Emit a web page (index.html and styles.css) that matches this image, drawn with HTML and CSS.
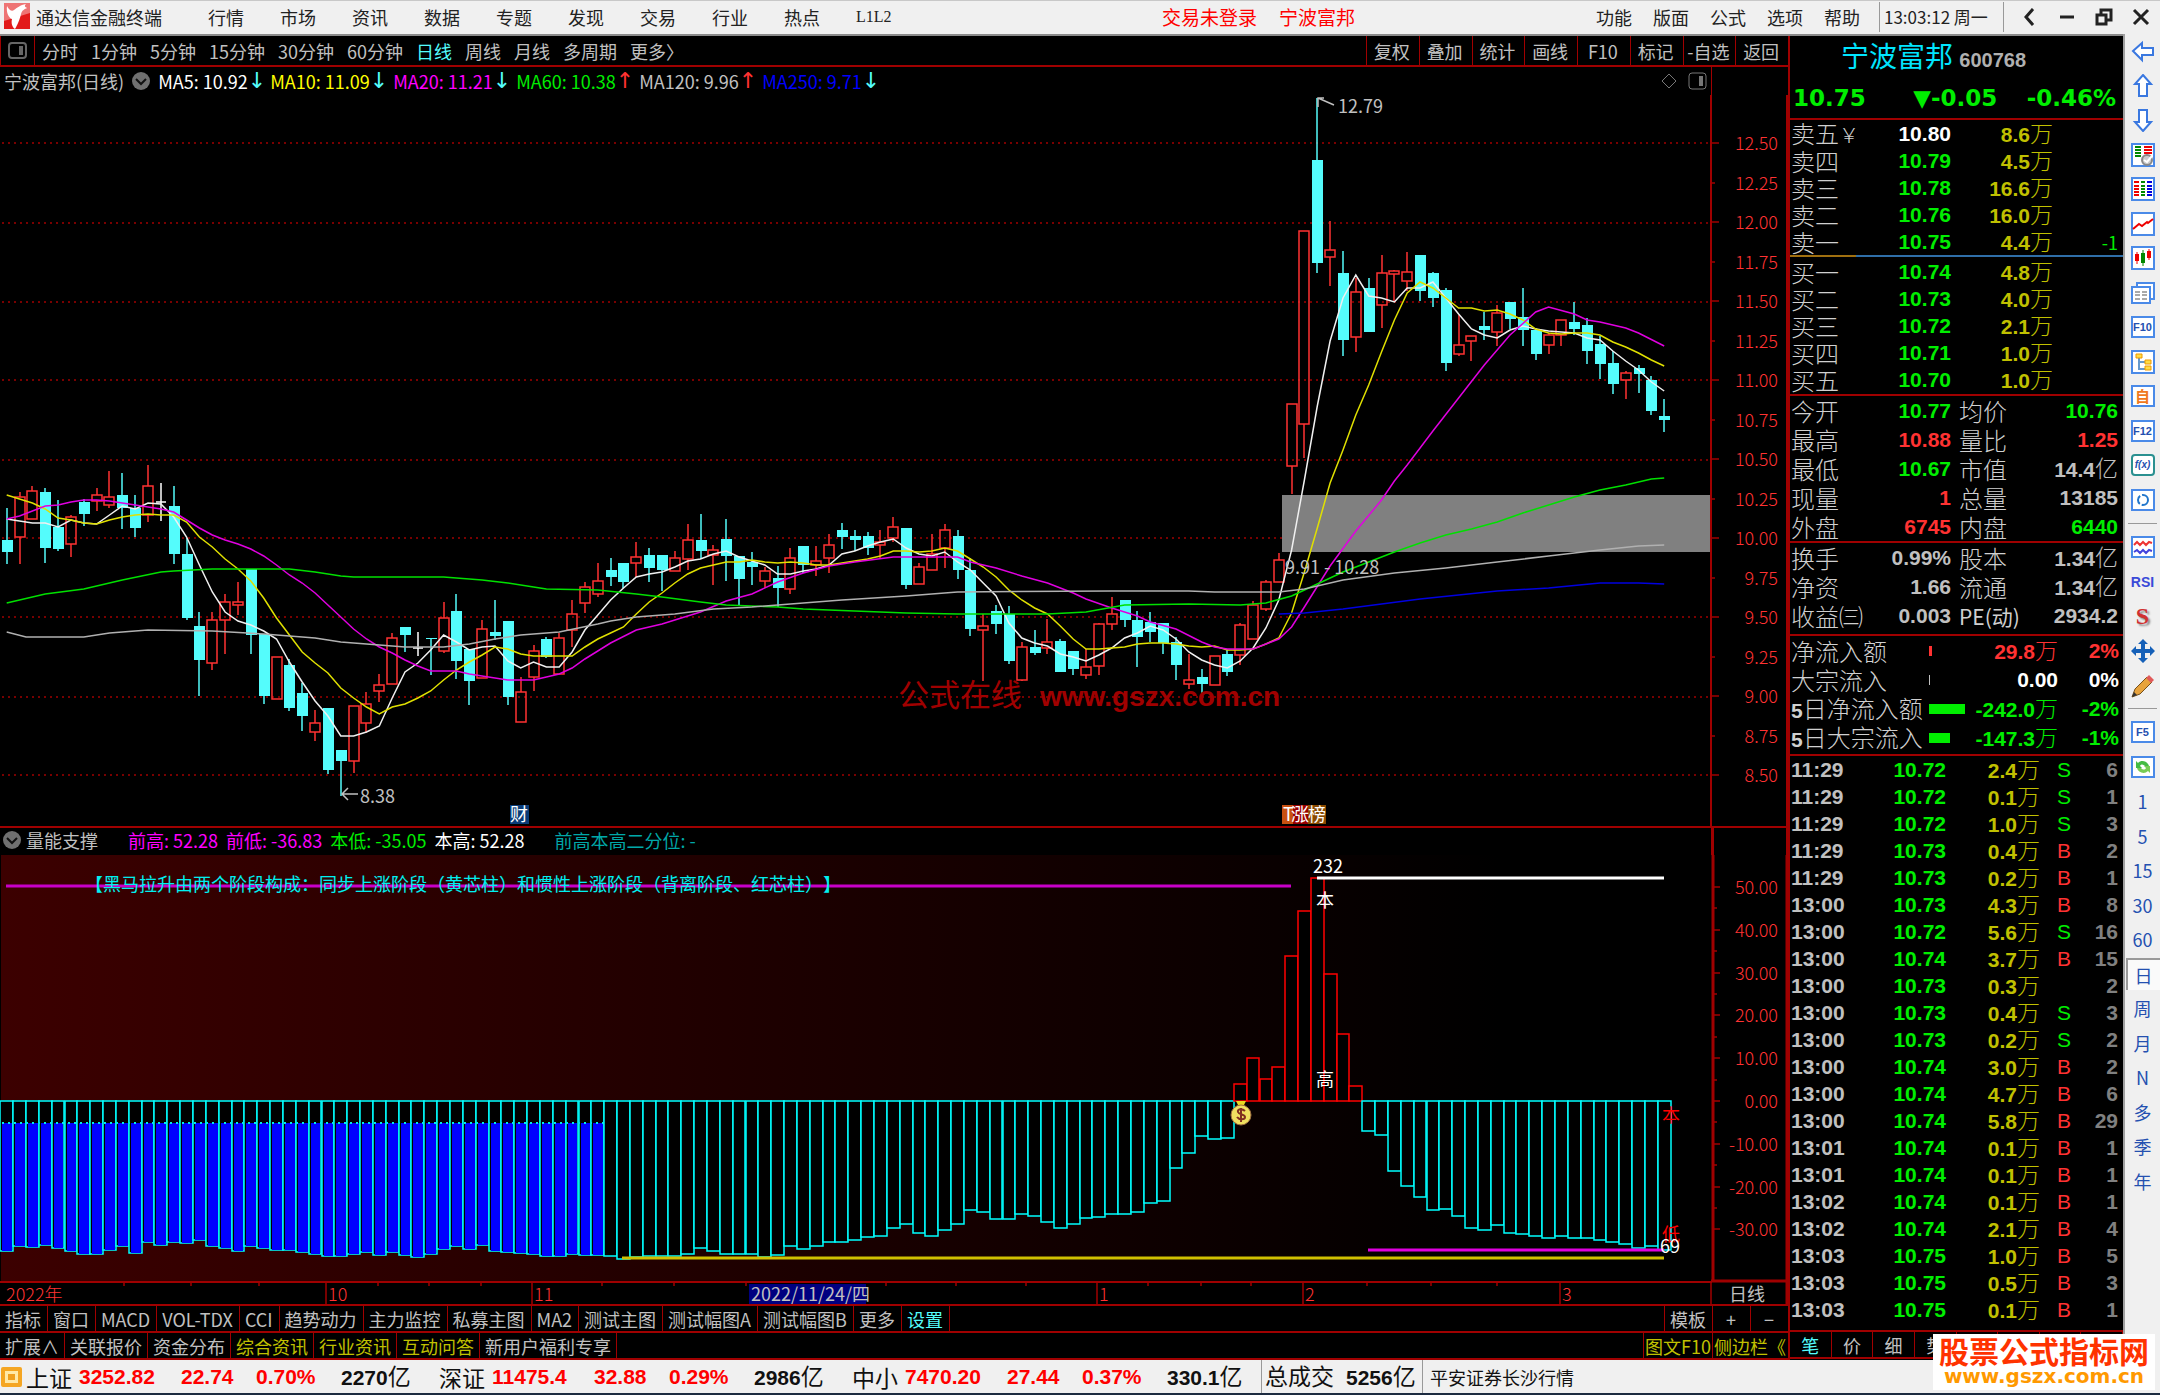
FILE: index.html
```html
<!DOCTYPE html>
<html lang="zh-CN">
<head>
<meta charset="utf-8">
<title>通达信金融终端</title>
<link rel="stylesheet" href="styles.css">
</head>
<body>
<header class="titlebar">
  <svg class="logo" viewBox="0 0 26 26"><rect width="26" height="26" fill="#e21a1a"/><path d="M0 0h26v10L0 18z" fill="#ee7474"/><path d="M3 3c2 4 5 6 7 4 3-2 6-5 12-6-2 2-1 3 1 4-2 1-5 2-6 6-1 5-4 12-6 15-3-2-4-6-3-10-3-1-6-6-5-13z" fill="#fff"/></svg>
  <h1 class="app-name">通达信金融终端</h1>
  <nav class="menu main-menu">
    <a href="#">行情</a><a href="#">市场</a><a href="#">资讯</a><a href="#">数据</a><a href="#">专题</a><a href="#">发现</a><a href="#">交易</a><a href="#">行业</a><a href="#">热点</a><a href="#" class="latin">L1L2</a>
  </nav>
  <div class="session"><span>交易未登录</span><span>宁波富邦</span></div>
  <nav class="menu tool-menu">
    <a href="#">功能</a><a href="#">版面</a><a href="#">公式</a><a href="#">选项</a><a href="#">帮助</a>
  </nav>
  <div class="clock">13:03:12 周一</div>
  <div class="window-buttons">
    <button aria-label="后退"><svg viewBox="0 0 20 20"><path d="M13 2L6 10l7 8" /></svg></button>
    <button aria-label="最小化"><svg viewBox="0 0 20 20"><path d="M3 10h14"/></svg></button>
    <button aria-label="还原"><svg viewBox="0 0 20 20"><path d="M3 8h9v9H3zM7 8V3h10v10h-5"/></svg></button>
    <button aria-label="关闭"><svg viewBox="0 0 20 20"><path d="M3 3l14 14M17 3L3 17"/></svg></button>
  </div>
</header>

<div class="workspace">
  <main class="main">
    <div class="periods">
      <button class="pane-toggle" aria-label="面板"><svg viewBox="0 0 20 18"><rect x="1" y="1" width="17" height="15" rx="3"/><path d="M13 4v9" stroke-width="4"/></svg></button>
      <button>分时</button><button>1分钟</button><button>5分钟</button><button>15分钟</button><button>30分钟</button><button>60分钟</button><button class="active">日线</button><button>周线</button><button>月线</button><button>多周期</button><button>更多〉</button>
      <div class="actions">
        <button>复权</button><button>叠加</button><button>统计</button><button>画线</button><button>F10</button><button>标记</button><button>-自选</button><button>返回</button>
      </div>
    </div>

    <section class="pane">
      <div class="legend">
        <div class="legend-items">
          <span>宁波富邦(日线)</span>
          <svg class="drop" viewBox="0 0 20 20"><circle cx="10" cy="10" r="9"/><path d="M5 8l5 5 5-5"/></svg>
          <span class="ma white">MA5: 10.92<b class="down">↓</b></span>
          <span class="ma yellow">MA10: 11.09<b class="down">↓</b></span>
          <span class="ma magenta">MA20: 11.21<b class="down">↓</b></span>
          <span class="ma lime">MA60: 10.38<b class="up">↑</b></span>
          <span class="ma silver">MA120: 9.96<b class="up">↑</b></span>
          <span class="ma blue">MA250: 9.71<b class="down">↓</b></span>
          <svg class="pane-icons" viewBox="0 0 50 20"><path d="M11 3l7 7-7 7-7-7z"/><rect x="31" y="2" width="17" height="16" rx="3"/><path d="M43 5v10" stroke-width="4"/></svg>
        </div>
        <div class="axis-head"></div>
      </div>
      <svg class="chart" id="price" viewBox="0 95 1788 731"></svg>
    </section>

    <section class="pane">
      <div class="legend sub">
        <div class="legend-items">
          <svg class="drop" viewBox="0 0 20 20"><circle cx="10" cy="10" r="9"/><path d="M5 8l5 5 5-5"/></svg>
          <span class="study">量能支撑</span>
          <span class="magenta">前高: 52.28</span><span class="magenta">前低: -36.83</span><span class="lime">本低: -35.05</span><span class="white">本高: 52.28</span><span class="teal">前高本高二分位: -</span>
        </div>
        <div class="axis-head boxed"></div>
      </div>
      <svg class="chart" id="volume" viewBox="0 855 1788 451"></svg>
    </section>

    <div class="tabs indicators">
      <button>指标</button><button>窗口</button><button>MACD</button><button>VOL-TDX</button><button>CCI</button><button>趋势动力</button><button>主力监控</button><button>私募主图</button><button>MA2</button><button>测试主图</button><button>测试幅图A</button><button>测试幅图B</button><button>更多</button><button class="active">设置</button>
      <div class="tabs-end"><button>模板</button><button class="zoom">+</button><button class="zoom">−</button></div>
    </div>
    <div class="tabs">
      <button>扩展∧</button><button>关联报价</button><button>资金分布</button><button class="gold">综合资讯</button><button class="gold">行业资讯</button><button class="gold">互动问答</button><button>新用户福利专享</button>
      <div class="tabs-end"><button class="gold f10">图文F10</button><button class="gold side">侧边栏《</button></div>
    </div>
  </main>

  <aside class="quote">
    <h2 class="stock">宁波富邦 <small>600768</small></h2>
    <div class="last"><span>10.75</span><span class="chg"><i>▼</i>-0.05</span><span>-0.46%</span></div>
    <table class="book asks">
      <colgroup><col class="c1"><col class="c2"><col class="c3"><col></colgroup>
      <tr><th>卖五<span class="yen">￥</span></th><td class="white">10.80</td><td class="gold">8.6<i>万</i></td><td></td></tr>
      <tr><th>卖四</th><td>10.79</td><td class="gold">4.5<i>万</i></td><td></td></tr>
      <tr><th>卖三</th><td>10.78</td><td class="gold">16.6<i>万</i></td><td></td></tr>
      <tr><th>卖二</th><td>10.76</td><td class="gold">16.0<i>万</i></td><td></td></tr>
      <tr><th>卖一</th><td>10.75</td><td class="gold">4.4<i>万</i></td><td class="delta">-1</td></tr>
    </table>
    <div class="split"></div>
    <table class="book bids">
      <colgroup><col class="c1"><col class="c2"><col class="c3"><col></colgroup>
      <tr><th>买一</th><td>10.74</td><td class="gold">4.8<i>万</i></td><td></td></tr>
      <tr><th>买二</th><td>10.73</td><td class="gold">4.0<i>万</i></td><td></td></tr>
      <tr><th>买三</th><td>10.72</td><td class="gold">2.1<i>万</i></td><td></td></tr>
      <tr><th>买四</th><td>10.71</td><td class="gold">1.0<i>万</i></td><td></td></tr>
      <tr><th>买五</th><td>10.70</td><td class="gold">1.0<i>万</i></td><td></td></tr>
    </table>
    <table class="stats">
      <colgroup><col class="s1"><col class="s2"><col class="s3"><col></colgroup>
      <tr><th>今开</th><td>10.77</td><th>均价</th><td>10.76</td></tr>
      <tr><th>最高</th><td class="red">10.88</td><th>量比</th><td class="red">1.25</td></tr>
      <tr><th>最低</th><td>10.67</td><th>市值</th><td class="silver">14.4<i>亿</i></td></tr>
      <tr><th>现量</th><td class="red">1</td><th>总量</th><td class="silver">13185</td></tr>
      <tr><th>外盘</th><td class="red">6745</td><th>内盘</th><td>6440</td></tr>
    </table>
    <table class="stats second">
      <colgroup><col class="s1"><col class="s2"><col class="s3"><col></colgroup>
      <tr><th>换手</th><td class="silver">0.99%</td><th>股本</th><td class="silver">1.34<i>亿</i></td></tr>
      <tr><th>净资</th><td class="silver">1.66</td><th>流通</th><td class="silver">1.34<i>亿</i></td></tr>
      <tr><th>收益㈢</th><td class="silver">0.003</td><th><span class="pe">PE(动)</span></th><td class="silver">2934.2</td></tr>
    </table>
    <table class="stats flow">
      <colgroup><col class="f1"><col class="f2"><col class="f3"><col></colgroup>
      <tr class="red"><th>净流入额</th><td><div class="bar tiny"></div></td><td>29.8<i>万</i></td><td>2%</td></tr>
      <tr class="white"><th>大宗流入</th><td><div class="bar hair"></div></td><td>0.00</td><td>0%</td></tr>
      <tr><th><b>5</b>日净流入额</th><td><div class="bar wide"></div></td><td>-242.0<i>万</i></td><td>-2%</td></tr>
      <tr><th><b>5</b>日大宗流入</th><td><div class="bar mid"></div></td><td>-147.3<i>万</i></td><td>-1%</td></tr>
    </table>
    <table class="ticks">
      <colgroup><col class="t1"><col class="t2"><col class="t3"><col></colgroup>
      <tbody id="ticks"></tbody>
    </table>
    <div class="quote-tabs"><button class="active">笔</button><button>价</button><button>细</button><button>势</button><button aria-label="联"></button><button aria-label="值"></button><button aria-label="主"></button><button aria-label="筹"></button></div>
  </aside>

  <aside class="sidebar">
    <div class="group">
      <button aria-label="左"><svg viewBox="0 0 24 24" class="arrow"><path d="M2 12l9-8v5h11v7H11v5z"/></svg></button>
      <button aria-label="上"><svg viewBox="0 0 24 24" class="arrow"><path d="M12 1l8 9h-4v12H8V10H4z"/></svg></button>
      <button aria-label="下"><svg viewBox="0 0 24 24" class="arrow"><path d="M12 23l8-9h-4V2H8v12H4z"/></svg></button>
      <button aria-label="报价设置"><svg viewBox="0 0 24 24"><rect class="fr" x="1" y="1" width="22" height="22"/><path d="M4 4h6M4 7h6M4 10h6M4 13h6" stroke="#080"/><path d="M13 4h8M13 7h8M13 10h8" stroke="#e00"/><circle cx="16" cy="17" r="5" fill="#ccc" stroke="#888"/><path d="M13 17l3 2 5-6" stroke="#fff"/></svg></button>
      <button aria-label="报价"><svg viewBox="0 0 24 24"><rect class="fr" x="1" y="1" width="22" height="22"/><path d="M3 5h5M3 9h5M3 12h5M3 15h5M3 18h5" stroke="#e00"/><path d="M10 5h4M10 9h4M10 12h4M10 15h4M10 18h4" stroke="#080"/><path d="M16 5h5M16 9h5M16 12h5M16 15h5M16 18h5" stroke="#00d"/></svg></button>
      <button aria-label="分时图"><svg viewBox="0 0 24 24"><rect class="fr" x="1" y="1" width="22" height="22"/><path d="M2 17l6-5 3 2 5-4 1 1 5-4" stroke="#e00"/></svg></button>
      <button aria-label="K线"><svg viewBox="0 0 24 24"><rect class="fr" x="1" y="1" width="22" height="22"/><path d="M6 6v12M18 3v11" stroke="#e00" stroke-width="1"/><path d="M6 8v7M18 5v7" stroke="#e00" stroke-width="4"/><path d="M12 4v16" stroke="#080" stroke-width="1"/><path d="M12 7v10" stroke="#080" stroke-width="4"/></svg></button>
      <button aria-label="资料"><svg viewBox="0 0 24 24"><path class="fr" d="M6 5V2h17v16h-4"/><rect class="fr" x="1" y="6" width="18" height="16"/><path d="M4 11h5M11 11h5M4 14h5M11 14h5M4 18h5M11 18h5" stroke="#555" stroke-width="1"/></svg></button>
      <button class="key">F10</button>
      <button aria-label="板块"><svg viewBox="0 0 24 24"><rect class="fr" x="1" y="1" width="22" height="22"/><path d="M8 6v13h6M8 12h6" stroke="#69c"/><path d="M5 4h6v4H5zM14 10h6v4h-6zM14 16h6v4h-6z" fill="#fd4" stroke="#e90" stroke-width="1"/></svg></button>
      <button class="key orange">自</button>
      <button class="key">F12</button>
      <button class="key fx">f(x)</button>
      <button aria-label="刷新"><svg viewBox="0 0 24 24"><rect class="fr" x="1" y="2" width="22" height="20"/><circle cx="12" cy="12" r="5" stroke="#27c" stroke-width="2" stroke-dasharray="9 2"/></svg></button>
    </div>
    <hr>
    <div class="group five">
      <button aria-label="多股"><svg viewBox="0 0 24 24"><rect class="fr" x="1" y="2" width="22" height="20"/><path d="M3 10l3-3 3 3 3-3 3 3 3-3 3 1" stroke="#e33"/><path d="M3 17l3-2 3 3 3-3 3 3 3-3 3 1" stroke="#44d"/></svg></button>
      <button class="rsi">RSI</button>
      <button class="dollar">S</button>
      <button aria-label="移动"><svg viewBox="0 0 24 24"><path d="M12 0l5 5h-3v5h5V7l5 5-5 5v-3h-5v5h3l-5 5-5-5h3v-5H5v3l-5-5 5-5v3h5V5H7z" fill="#1560b8"/></svg></button>
      <button aria-label="画笔"><svg viewBox="0 0 24 24"><path d="M1 23l3-8L16 3l5 5L9 20z" fill="#e8a33c" stroke="#75501c" stroke-width="1"/><path d="M15 4l3-3 5 5-3 3z" fill="#e05a5a"/><path d="M1 23l2-5 3 3z" fill="#333"/></svg></button>
    </div>
    <hr class="low">
    <div class="group">
      <button class="key">F5</button>
      <button aria-label="同步"><svg viewBox="0 0 24 24"><rect class="fr" x="1" y="2" width="22" height="20"/><path d="M5 13V6l2 2c4-4 10-1 11 3h-4c-2-2-4-2-5 0l2 2z" fill="#4b4"/><path d="M19 11v7l-2-2c-4 4-10 1-11-3h4c2 2 4 2 5 0l-2-2z" fill="#7c5"/></svg></button>
      <button>1</button><button>5</button><button>15</button><button>30</button><button>60</button><button class="pressed">日</button><button>周</button><button>月</button><button>N</button><button>多</button><button>季</button><button>年</button>
    </div>
  </aside>
</div>

<footer class="status">
  <svg class="status-icon" viewBox="0 0 23 23"><rect x="1" y="2" width="21" height="20" rx="2" fill="#f5a623"/><rect x="5" y="6" width="13" height="12" fill="#ffe9a8"/><rect x="8" y="9" width="7" height="6" fill="#f0a020"/></svg>
  <div class="index"><span class="n">上证</span><b>3252.82</b><b>22.74</b><b>0.70%</b><b class="amt">2270<i>亿</i></b></div>
  <div class="index"><span class="n">深证</span><b>11475.4</b><b>32.88</b><b>0.29%</b><b class="amt">2986<i>亿</i></b></div>
  <div class="index"><span class="n">中小</span><b>7470.20</b><b>27.44</b><b>0.37%</b><b class="amt">330.1<i>亿</i></b></div>
  <div class="total"><span class="n">总成交</span><b class="amt">5256<i>亿</i></b></div>
  <div class="source">平安证券长沙行情</div>
</footer>
<div class="brand"><strong>股票公式指标网</strong><span>www.gszx.com.cn</span></div>
<script src="chart.js"></script>
</body>
</html>
```
FILE: styles.css
```css
* { box-sizing: border-box; }
body {
  margin: 0; min-height: 100vh; display: flex; flex-direction: column; position: relative;
  background: #1c2b40; color: #c0c0c0;
  font: 400 18px/24px "Noto Sans CJK SC", sans-serif;
}
button { font: inherit; color: inherit; background: none; border: 0; padding: 0; margin: 0; white-space: nowrap; }
a { color: inherit; text-decoration: none; }
h1, h2 { margin: 0; font-weight: 300; }
table { border-collapse: collapse; table-layout: fixed; width: 100%; }
th, td { padding: 0; font-weight: 300; }
i { font-style: normal; }

.white { color: #fff; }
.yellow { color: #ff0; }
.magenta { color: #f0f; }
.lime { color: #0e0; }
.silver { color: #c0c0c0; }
.blue { color: #00f; }
.teal { color: #00a8a8; }
.gold { color: #c0c000; }
.red { color: #ff3232; }

/* title bar */
.titlebar { display: flex; align-items: center; height: 36px; padding-bottom: 2px; background: #f0f0f0; color: #222; border-top: 1px solid #c8c8c8; border-bottom: 2px solid #8a8a8a; }
.logo { width: 26px; height: 26px; margin: 0 6px 2px 4px; }
.app-name { font-size: 18px; font-weight: 400; width: 172px; white-space: nowrap; }
.menu { display: flex; }
.main-menu { gap: 36px; width: 954px; }
.latin { font-family: "Liberation Serif", serif; font-size: 16px; }
.session { display: flex; gap: 22px; color: #f00; font-size: 19px; flex: 1; }
.tool-menu { gap: 21px; padding-right: 19px; }
.clock { font-size: 17px; width: 125px; padding-left: 4px; line-height: 30px; border-left: 1px solid #999; border-right: 1px solid #999; white-space: nowrap; }
.window-buttons { display: flex; gap: 17px; padding: 0 9px 0 16px; }
.window-buttons svg { display: block; width: 20px; height: 20px; fill: none; stroke: #222; stroke-width: 3; }

.workspace { display: flex; flex: 1; }
.main { flex: 1; min-width: 0; background: #000; }

/* period toolbar */
.periods { display: flex; gap: 13px; height: 31px; border-bottom: 2px solid #a00000; align-items: stretch; line-height: 26px; }
.pane-toggle { width: 35px; margin-right: -6px; border-right: 1px solid #a00000; border-left: 1px solid #a00000; }
.pane-toggle svg { width: 20px; height: 18px; display: block; margin: auto; fill: none; stroke: #666; stroke-width: 2; }
.periods .active, .tabs .active, .quote-tabs .active { color: #54fcfc; }
.actions { display: flex; margin-left: auto; width: 422px; }
.actions button { flex: 1; border-left: 1px solid #a00000; padding-right: 2px; }

/* chart panes */
.legend { display: flex; height: 28px; }
.legend-items { flex: 1; display: flex; align-items: center; padding-left: 4px; white-space: nowrap; }
.axis-head { width: 77px; border-left: 1px solid #a00000; }
.drop { width: 20px; height: 20px; margin: 0 7px; fill: #707070; stroke: #111; stroke-width: 2; }
.drop circle { stroke: none; }
.ma { display: flex; width: 123px; }
.ma.white { width: 112px; }
.ma b { width: 13px; font: 22px/24px "DejaVu Sans", sans-serif; text-align: center; }
.down { color: #54fcfc; }
.up { color: #ff3232; }
.pane-icons { width: 50px; height: 20px; margin-left: auto; margin-right: 3px; fill: none; stroke: #777; stroke-width: 1; }
.legend.sub { border-top: 2px solid #a00000; height: 29px; }
.sub .legend-items { gap: 8px; padding: 0 0 4px 2px; }
.sub .drop { margin: 0 -4px 0 0; }
.study { margin-right: 22px; }
.sub .teal { margin-left: 22px; }
.boxed { border-left: 3px solid #a00000; border-right: 2px solid #a00000; }
.chart { display: block; width: 100%; height: auto; overflow: visible; }
.chart text { font: 18px "Noto Sans CJK SC", sans-serif; fill: #c0c0c0; text-spacing-trim: space-all; }
.chart .ax { fill: #ff3232; text-anchor: end; font-weight: 300; }
.chart .month { fill: #ff3232; font-weight: 300; }
.chart .mark { fill: #a00000; font-size: 31px; }
.chart .url { fill: #a00000; font: bold 28px "Liberation Sans", sans-serif; }
.chart .note { fill: #00f0f0; }
.chart .w { fill: #fff; }
.chart .r { fill: #f00; }
.line { fill: none; stroke-width: 1.5; }
.grid { stroke: #a00000; stroke-width: 1.5; stroke-dasharray: 2 4; }

/* indicator tabs */
.tabs { display: flex; height: 27px; border-bottom: 2px solid #a00000; line-height: 24px; }
.tabs button { padding: 0 5px; border-right: 1px solid #a00000; }
.indicators button { padding: 0 6px 0 5px; }
.tabs-end { display: flex; margin-left: auto; }
.tabs-end button { border-right: 0; border-left: 1px solid #a00000; }
.tabs-end .zoom { width: 38px; }
.tabs-end .f10 { padding: 0 1px; }
.tabs-end .side { width: 76px; padding: 0 1px; text-align: left; overflow: hidden; }

/* quote panel */
.quote { width: 335px; background: #000; border-left: 2px solid #a00000; }
.stock { height: 40px; padding-left: 51px; font-size: 28px; line-height: 38px; color: #00e5ff; font-weight: 400; }
.stock small { font: bold 20px "Liberation Sans", sans-serif; color: #b0b0b0; }
.last { display: flex; justify-content: space-between; height: 44px; padding: 0 7px 0 3px; border-bottom: 2px solid #a00000; color: #0e0; font: bold 23px/44px "DejaVu Sans", sans-serif; }
.chg { margin-left: 18px; }
.quote td { text-align: right; color: #0e0; font: bold 21px/20px "Liberation Sans", sans-serif; white-space: nowrap; }
.quote th { text-align: left; padding-left: 1px; font-size: 24px; line-height: 24px; white-space: nowrap; color: #d0d0d0; }
.quote td i { font: 300 23px/18px "Noto Sans CJK SC", sans-serif; }
.quote td.white, .quote .white td { color: #fff; }
.quote td.gold { color: #c0c000; }
.quote td.red, .quote .red td { color: #ff3232; }
.quote td.silver { color: #c0c0c0; }
.quote tr { height: 27px; }
.quote td:last-child { padding-right: 5px; }
.c1 { width: 99px; } .c2 { width: 62px; } .c3 { width: 102px; }
.yen { font-size: 20px; }
.quote td.delta { font: 400 18px/20px "Noto Sans CJK SC", sans-serif; }
.split { height: 2px; background: linear-gradient(90deg, #a07010 0 66px, #2f6ea8 66px); }
.bids { margin: 1px 0 0; }
.stats { border-top: 2px solid #a00000; border-collapse: separate; border-spacing: 0; }
.bids + .stats { margin-top: 1px; }
.quote .stats tr { height: 29px; }
.second { padding-bottom: 4px; }
.flow { padding-bottom: 2px; }
.s1 { width: 79px; } .s2 { width: 82px; } .s3 { width: 78px; }
.stats th:nth-child(3) { padding-left: 8px; }
.pe { font-size: 21px; font-weight: 400; }
.f1 { width: 139px; } .f2 { width: 38px; } .f3 { width: 91px; }
.flow b { font: bold 21px/20px "Liberation Sans", sans-serif; }
.quote .flow td:last-child { padding-right: 4px; }
.bar { height: 10px; background: #0e0; }
.tiny { width: 3px; background: #ff3232; }
.hair { width: 1px; background: #c0c0c0; }
.wide { width: 36px; }
.mid { width: 21px; }
.ticks { border-top: 2px solid #a00000; border-collapse: separate; border-spacing: 0; padding-bottom: 7px; }
.t1 { width: 156px; } .t2 { width: 94px; } .t3 { width: 48px; }
.ticks .time { float: left; padding-left: 1px; color: #c0c0c0; }
.quote .ticks td.side { text-align: center; font-weight: normal; }
.quote .ticks td.n { color: #808080; }
.quote-tabs { display: flex; height: 29px; border-top: 2px solid #a00000; border-bottom: 2px solid #a00000; }
.quote-tabs button { flex: 1; border-right: 1px solid #a00000; }

/* right tool strip */
.sidebar { width: 37px; background: #f0f0f0; border-left: 2px solid #a0a0a0; margin-top: -2px; color: #2450b0; }
.group { display: grid; grid-auto-rows: 1fr; min-height: 483px; justify-items: center; align-items: center; }
.five { min-height: 173px; }
.group button { width: 34px; line-height: 30px; }
.group svg { display: block; width: 24px; height: 24px; margin: auto; fill: none; stroke-width: 2; }
.fr { fill: #fff; stroke: #4a8ae8; }
.arrow path { fill: #fff; stroke: #3a78e0; }
.sidebar hr { margin: 6px 3px; border: 0; height: 1px; background: #999; }
.sidebar .low { margin: 5px 3px 6px; }
.group .key { width: 24px; height: 22px; border: 2px solid #4a8ae8; background: #fff; font: bold 11px/18px "Liberation Sans", sans-serif; }
.group .orange { color: #f07820; font: bold 15px/18px "Noto Sans CJK SC", sans-serif; }
.group .fx { border-color: #2a9090; border-radius: 4px; font-style: italic; font-size: 10px; }
.group .rsi { font: bold 14px "Liberation Sans", sans-serif; color: #3a4ad8; }
.group .dollar { font: bold 24px "Liberation Serif", serif; color: #d03030; text-shadow: 2px 2px 2px #888; }
.group .pressed { border-top: 2px solid #999; border-left: 2px solid #999; background: #fafafa; }

/* index status bar */
.status { display: flex; align-items: center; height: 33px; margin-bottom: 2px; background: #f0f0f0; color: #111; white-space: nowrap; }
.status b { font: bold 21px/30px "Liberation Sans", sans-serif; color: #f00; }
.status .amt { color: #111; }
.status i, .n { font: 400 23px/30px "Noto Sans CJK SC", sans-serif; }
.status-icon { width: 23px; height: 23px; margin-right: 3px; }
.index { display: grid; grid-template-columns: 53px 102px 75px 85px 98px; align-items: center; }
.total { display: flex; gap: 12px; width: 162px; padding-left: 3px; margin-right: 7px; border-left: 1px solid #999; border-right: 1px solid #999; line-height: 32px; margin-left: -4px; }
.brand { position: absolute; right: 5px; bottom: 5px; width: 222px; height: 56px; padding: 0 6px; background: #fff; text-align: center; white-space: nowrap; }
.brand strong { display: block; font: bold 30px/32px "Noto Sans CJK SC", sans-serif; color: #f30; }
.brand span { display: block; font: bold 20px/20px "DejaVu Sans", sans-serif; color: #f90; }
```
FILE: chart.js
```js
// Horizontal position of the i-th trading day.
const X = i => 6.7 + i * 12.849;
const CYAN = '#54fcfc', RED = '#ff3232';

// One row per day: kind (u = up, d = down, w = unchanged), then high, body top, body bottom, low.
const candles = `d508 540 552 564|u492 497 537 564|u486 491 519 519|d488 492 548 563|d500 527 549 551|u515 517 544 557|d499 502 514 526|u488 495 501 511|u471 497 505 508|d473 495 508 529
d495 508 528 537|u465 486 515 522|w483 502 502 521|d486 506 554 564|d538 554 618 620|d612 626 660 696|u612 620 663 670|u594 602 620 654|u582 602 605 615|d569 569 635 654
d634 634 696 704|u657 657 699 699|d659 665 708 711|d683 693 716 731|u710 723 732 741|d708 708 770 774|d750 750 761 796|u706 706 761 773|u692 704 723 733|u674 685 691 702
u633 638 684 684|d627 627 635 652|w632 648 648 656|d638 638 639 675|u602 618 651 653|d594 611 661 679|d649 649 681 705|u620 629 678 678|d600 632 636 640|d621 621 697 705
u677 692 722 722|u645 651 677 691|d637 639 657 658|u633 638 674 674|u600 614 630 647|u582 587 603 613|u563 581 594 597|d558 570 577 586|d563 563 582 588|u542 557 563 577
d548 555 568 582|d555 555 570 591|u551 558 571 571|u524 540 559 570|d514 540 551 559|u545 550 555 585|d519 539 556 581|d556 556 579 605|d552 562 567 585|u567 571 581 588
d566 578 588 607|u548 558 589 594|d546 546 565 573|u546 561 565 576|u534 545 558 573|d523 530 537 549|d530 536 540 551|d532 536 548 555|u530 542 545 558|u517 527 538 542
d528 528 585 589|u563 567 584 584|u534 554 570 570|u524 530 548 568|d530 536 570 579|d558 570 629 636|u614 626 630 681|d605 611 624 634|d606 614 661 664|u642 647 680 681
d630 647 653 655|u619 642 648 654|d639 641 672 672|d651 651 669 675|u649 667 675 679|u623 624 666 675|u597 614 624 630|d600 600 620 627|d611 620 637 667|d612 622 632 642
d623 623 643 654|d637 642 665 680|u654 680 684 689|d669 677 684 695|u656 656 685 685|d649 654 672 676|u623 625 655 665|u601 605 639 639|u580 582 609 611|u553 560 582 582
u404 404 466 494|u231 231 424 458|d98 160 263 273|u221 250 257 286|d251 273 340 356|u278 292 337 352|d278 288 332 332|u255 273 305 328|u270 271 274 302|u252 272 281 291
d255 255 291 301|d272 273 298 307|d288 290 363 371|u315 345 354 356|u336 336 341 361|d312 326 330 340|u305 313 332 346|d302 302 319 329|d288 317 330 346|d328 330 354 360
u333 335 345 354|u320 320 335 346|d302 322 329 335|d318 325 351 364|d336 344 364 379|d351 363 384 394|u371 373 380 399|d365 368 374 393|d376 380 411 415|d399 416 420 432`
  .split(/[|\n]/).map(s => [s[0], ...s.slice(1).split(' ').map(Number)]);

// Moving averages, one value per day.
const ma5 = [519,521,523,523,527,520,523,524,515,506,509,503,504,517,537,565,592,612,621,625,631,639,662,682,701,716,736,736,732,726,698,672,663,650,635,642,650,647,646,661,668,662,667,667,652,630,615,600,588,577,574,572,567,561,559,554,551,557,561,565,574,574,571,569,565,554,551,546,542,539,548,554,556,552,562,570,583,596,623,638,643,646,654,657,661,655,648,638,633,626,630,639,652,660,665,668,661,648,628,600,550,480,406,341,298,275,296,298,302,288,288,282,298,314,329,335,338,330,326,329,331,332,333,338,340,351,361,370,382,391];
const ma10 = [495,499,503,509,518,520,523,524,520,517,515,514,515,515,522,537,547,559,569,581,598,618,635,652,663,673,688,698,707,714,707,704,698,691,680,670,662,655,647,649,654,656,656,656,656,647,639,633,627,614,602,593,583,574,568,565,562,562,560,562,563,562,563,565,565,563,561,559,556,551,551,552,551,548,551,559,567,577,590,600,608,614,626,639,649,649,648,647,644,643,643,644,646,647,646,650,650,649,644,638,613,572,528,483,450,415,385,352,320,293,282,288,298,308,308,311,310,314,320,329,333,334,333,333,335,342,347,353,360,366];

// Slower averages as [day, value] pairs.
const ma20 = [[0,519],[1,516],[2,511],[3,506],[4,505],[5,502],[6,500],[7,500],[8,501],[9,503],[11,507],[12,509],[13,512],[14,520],[15,528],[16,535],[17,540],[18,544],[19,549],[20,556],[21,565],[22,575],[23,583],[24,593],[25,605],[26,617],[27,629],[28,639],[29,647],[30,653],[31,660],[32,666],[33,671],[35,671],[36,674],[37,676],[39,680],[41,680],[42,677],[43,674],[44,668],[45,659],[46,651],[47,643],[49,630],[51,624],[53,616],[54,612],[56,601],[58,594],[60,582],[62,573],[64,566],[66,562],[69,557],[74,557],[75,562],[77,568],[79,576],[81,583],[83,593],[84,599],[86,608],[88,616],[89,622],[91,629],[93,642],[94,647],[95,649],[97,649],[98,644],[99,639],[100,627],[101,607],[103,566],[105,531],[107,500],[108,481],[109,465],[111,431],[113,398],[115,365],[117,335],[119,312],[120,307],[122,314],[123,320],[124,322],[126,328],[127,333],[129,346]];
const ma60 = [[0,603],[3,594],[6,589],[9,580],[12,572],[13,571],[16,569],[22,569],[24,572],[26,576],[27,577],[34,577],[37,580],[39,583],[41,587],[42,589],[46,590],[49,594],[51,597],[54,602],[56,605],[60,607],[62,609],[66,611],[70,613],[74,614],[81,614],[84,612],[87,605],[92,604],[96,605],[98,603],[100,596],[102,584],[104,572],[106,562],[108,552],[110,543],[112,535],[114,529],[116,522],[118,513],[120,505],[122,497],[124,490],[126,485],[128,479],[129,478]];
const ma120 = [[0,632],[1.5,637],[6,637],[8,633],[11,630],[16,631],[20,634],[24,638],[26,642],[29,645],[31,647],[34,647],[36,644],[38,639],[40,635],[43,632],[46,624],[47,621],[49,617],[52,614],[55,609],[58,607],[61,604],[65,600],[70,596],[74,592],[86,591],[92,591],[94,592],[99,592],[101,589],[104,580],[108,573],[112,568],[116,562],[120,556],[124,550],[127,546],[129,545]];
const ma250 = [[99,614],[101,613],[104,609],[110,599],[116,591],[120,588],[124,583],[127,583],[129,584]];

const line = (pts, color) =>
  `<polyline class="line" stroke="${color}" points="${pts.map(([i, y]) => X(i).toFixed(1) + ',' + y).join(' ')}"/>`;
const indexed = a => a.map((y, i) => [i, y]);
const path = (d, color, w) => `<path d="${d}" fill="none" stroke="${color}" stroke-width="${w || 1.5}"/>`;
const text = (x, y, cls, s) => `<text x="${x}" y="${y}" class="${cls}">${s}</text>`;

// Price pane
let p = '';
const gridY = [143, 223, 302, 380, 460, 538, 617, 697, 775];
gridY.forEach(y => { p += `<line class="grid" x1="2" x2="1710" y1="${y}" y2="${y}"/>`; });
p += '<rect x="1282" y="495" width="428" height="57" fill="#808080"/>';
candles.forEach(([k, h, t, b, l], i) => {
  const x = Math.round(X(i));
  if (k === 'd') {
    p += path(`M${x} ${h}V${l}`, CYAN) + `<rect x="${x - 5}" y="${t}" width="11" height="${b - t}" fill="${CYAN}"/>`;
  } else if (k === 'u') {
    p += path(`M${x} ${h}V${t}M${x} ${b}V${l}M${x - 5} ${t}h10V${b}h-10z`, RED);
  } else {
    p += path(`M${x} ${h}V${l}M${x - 5} ${t}h10`, '#fff');
  }
});
p += line(indexed(ma5), '#f0f0f0') + line(indexed(ma10), '#e0e000') + line(ma20, '#e000e0')
  + line(ma60, '#00e000') + line(ma120, '#b0b0b0') + line(ma250, '#0000e0');
p += path('M1711 95V826', '#a00000', 2) + path('M1787 95V826', '#a00000', 2);
for (let n = 0; n < 17; n++) {
  const y = Math.round(143 + n * 39.5);
  p += path(`M1711 ${y}h${n % 2 ? 4 : 8}`, '#a00000') + text(1778, y + 7, 'ax', (12.5 - n * 0.25).toFixed(2));
}
p += path('M1334 105L1318 98M1318 107V98h6', '#c0c0c0') + text(1338, 113, '', '12.79');
p += path('M358 794H342M348 788l-6 6 6 6', '#c0c0c0') + text(360, 803, '', '8.38');
p += text(1285, 574, '', '9.91 - 10.28');
p += text(898, 706, 'mark', '公式在线') + text(1040, 706, 'url', 'www.gszx.com.cn');
p += '<rect x="510" y="805" width="19" height="19" fill="#0a3c78"/>' + text(510, 821, 'w', '财');
p += '<rect x="1282" y="805" width="11" height="19" fill="#c85010"/><rect x="1293" y="805" width="15" height="19" fill="#900"/><rect x="1308" y="805" width="18" height="19" fill="#8a4a00"/>'
  + text(1283, 821, 'w', 'T') + text(1291, 821, 'w', '涨') + text(1308, 821, 'w', '榜');
document.getElementById('price').innerHTML = p;

// Indicator pane: far edge of each day's column; the base line is at 1101.
const cols = [1251,1246,1247,1245,1248,1251,1254,1254,1250,1246,1253,1242,1245,1242,1243,1240,1246,1248,1251,1246,1248,1250,1250,1252,1254,1256,1256,1254,1252,1255,1252,1255,1257,1254,1249,1246,1249,1245,1251,1252,1253,1254,1256,1256,1254,1255,1255,1256,1259,1257,1256,1256,1256,1254,1248,1251,1254,1254,1254,1257,1255,1246,1249,1246,1242,1242,1240,1237,1236,1228,1224,1233,1236,1230,1224,1210,1212,1219,1219,1214,1216,1222,1228,1224,1218,1217,1214,1214,1212,1203,1201,1168,1153,1136,1139,1138,1084,1058,1079,1067,956,911,878,974,1034,1086,1131,1135,1171,1186,1197,1210,1209,1216,1228,1230,1225,1233,1234,1236,1238,1236,1238,1238,1240,1242,1244,1248,1246,1250];
const ZERO = 1101;
let v = '<defs><linearGradient id="glow"><stop offset="0" stop-color="#3c0000"/><stop offset="1" stop-color="#000"/></linearGradient></defs>'
  + '<rect x="1" y="855" width="1500" height="427" fill="url(#glow)"/>'
  + path('M6 886H1291', '#c800c8', 3);
cols.forEach((y, i) => {
  const x = Math.round(X(i) - 6.4), w = Math.round(X(i) + 6.4) - x;
  const up = y < ZERO;
  v += `<rect x="${x}" y="${Math.min(y, ZERO)}" width="${w}" height="${Math.abs(y - ZERO)}" fill="#000" stroke="${up ? '#f00' : '#0ff'}" stroke-width="1.5"/>`;
  if (i < 47) v += `<rect x="${x + 2}" y="1123" width="${w - 3}" height="${y - 1123}" fill="#00f"/>`;
});
v += '<path d="M2 1123H603" stroke="#00e8e8" stroke-width="2" stroke-dasharray="2 4"/>';
v += path('M622 1258H1664', '#d0c000', 3) + path('M1368 1250H1664', '#e000e0', 3) + path('M1317 878H1664', '#fff', 3);
v += text(85, 891, 'note', '【黑马拉升由两个阶段构成：同步上涨阶段（黄芯柱）和惯性上涨阶段（背离阶段、红芯柱）】');
v += text(1313, 873, 'w', '232') + text(1316, 907, 'w', '本') + text(1316, 1086, 'w', '高')
  + text(1662, 1122, 'r', '本') + text(1662, 1241, 'r', '低') + text(1660, 1253, 'w', '69');
v += '<path d="M1236 1101h10l-3 6h-4z" fill="#e8d820"/><circle cx="1241" cy="1115" r="10" fill="#f0e060" stroke="#a07040"/><path d="M1245 1111c-3-3-8-2-7 1s7 2 7 5-6 3-8 0M1241 1108v14" fill="none" stroke="#803020" stroke-width="2"/>';
v += path('M1713 855V1281M1787 855V1306M1711 1281H1788', '#a00000', 3) + path('M0 1282H1712M0 1305H1788', '#a00000', 2);
for (let n = 0; n < 17; n++) {
  const y = Math.round(887 + n * 21.4);
  v += path(`M1713 ${y}h${n % 2 ? 4 : 7}`, '#a00000');
  if (n % 2 === 0) v += text(1778, y + 7, 'ax', (50 - n * 5).toFixed(2));
}
[[326, '10'], [532, '11'], [1097, '1'], [1303, '2'], [1560, '3']].forEach(([x, s]) => {
  v += path(`M${x} 1283V1305`, '#a00000') + text(x + 2, 1301, 'month', s);
});
[124, 191, 259, 378, 429, 481, 602, 674, 746, 886, 956, 1026, 1148, 1201, 1251, 1367, 1431, 1497].forEach(x => {
  v += path(`M${x} 1282v4`, '#a00000');
});
v += text(6, 1301, 'month', '2022年');
v += '<rect x="749" y="1284" width="117" height="20" fill="#000080"/>' + text(751, 1301, '', '2022/11/24/四');
v += path('M1711 1282V1306', '#a00000') + text(1729, 1301, '', '日线');
document.getElementById('volume').innerHTML = v;

// Time and sales
const ticks = `11:29 10.72 2.4 S 6|11:29 10.72 0.1 S 1|11:29 10.72 1.0 S 3|11:29 10.73 0.4 B 2|11:29 10.73 0.2 B 1|13:00 10.73 4.3 B 8|13:00 10.72 5.6 S 16|13:00 10.74 3.7 B 15|13:00 10.73 0.3 - 2|13:00 10.73 0.4 S 3|13:00 10.73 0.2 S 2|13:00 10.74 3.0 B 2|13:00 10.74 4.7 B 6|13:00 10.74 5.8 B 29|13:01 10.74 0.1 B 1|13:01 10.74 0.1 B 1|13:02 10.74 0.1 B 1|13:02 10.74 2.1 B 4|13:03 10.75 1.0 B 5|13:03 10.75 0.5 B 3|13:03 10.75 0.1 B 1`;
document.getElementById('ticks').innerHTML = ticks.split('|').map(row => {
  const [time, price, vol, side, n] = row.split(' ');
  return `<tr><td><span class="time">${time}</span>${price}</td><td class="gold">${vol}<i>万</i></td>`
    + `<td class="side ${side === 'B' ? 'red' : ''}">${side === '-' ? '' : side}</td><td class="n">${n}</td></tr>`;
}).join('');
```
